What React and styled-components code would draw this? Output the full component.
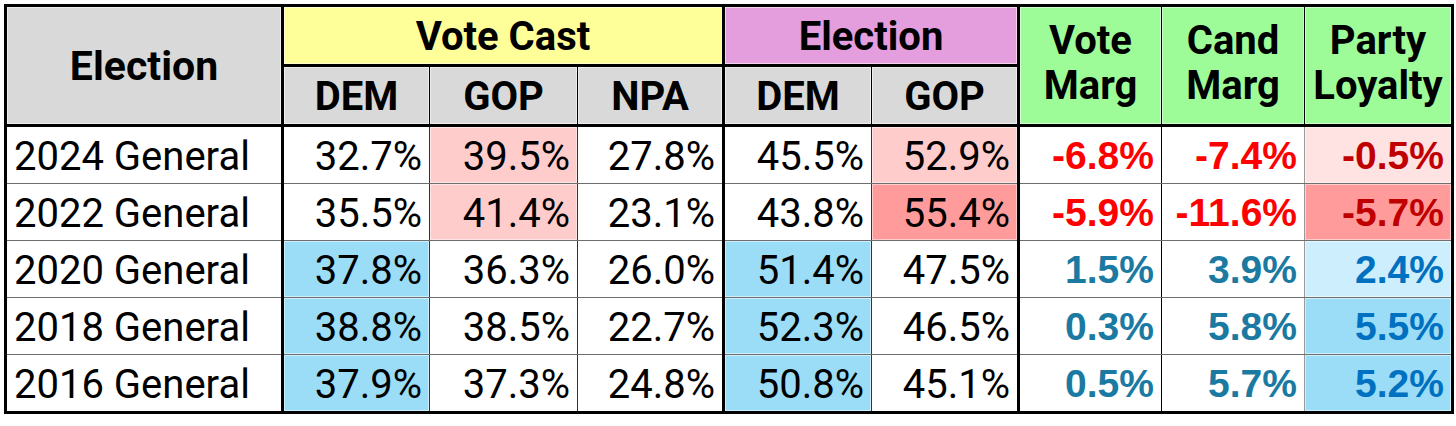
import React from "react";
import styled, { createGlobalStyle } from "styled-components";

// Werte der Tabelle, Zeile für Zeile
const rows = [
  {
    name: "2024 General",
    cast: ["32.7%", "39.5%", "27.8%"],
    castFill: [null, "pink", null],
    election: ["45.5%", "52.9%"],
    electionFill: [null, "pink"],
    vote: "-6.8%",
    cand: "-7.4%",
    loyalty: "-0.5%",
    loyaltyFill: "palePink",
  },
  {
    name: "2022 General",
    cast: ["35.5%", "41.4%", "23.1%"],
    castFill: [null, "pink", null],
    election: ["43.8%", "55.4%"],
    electionFill: [null, "red"],
    vote: "-5.9%",
    cand: "-11.6%",
    loyalty: "-5.7%",
    loyaltyFill: "red",
  },
  {
    name: "2020 General",
    cast: ["37.8%", "36.3%", "26.0%"],
    castFill: ["blue", null, null],
    election: ["51.4%", "47.5%"],
    electionFill: ["blue", null],
    vote: "1.5%",
    cand: "3.9%",
    loyalty: "2.4%",
    loyaltyFill: "paleBlue",
  },
  {
    name: "2018 General",
    cast: ["38.8%", "38.5%", "22.7%"],
    castFill: ["blue", null, null],
    election: ["52.3%", "46.5%"],
    electionFill: ["blue", null],
    vote: "0.3%",
    cand: "5.8%",
    loyalty: "5.5%",
    loyaltyFill: "blue",
  },
  {
    name: "2016 General",
    cast: ["37.9%", "37.3%", "24.8%"],
    castFill: ["blue", null, null],
    election: ["50.8%", "45.1%"],
    electionFill: ["blue", null],
    vote: "0.5%",
    cand: "5.7%",
    loyalty: "5.2%",
    loyaltyFill: "blue",
  },
];

const fills = {
  gray: "#d9d9d9",
  yellow: "#ffff99",
  purple: "#e49ddd",
  green: "#9dfb98",
  pink: "#ffcccc",
  red: "#ff9b9b",
  palePink: "#ffe2e2",
  blue: "#9bdcf6",
  paleBlue: "#cdeefc",
};

const isNeg = (v) => v.startsWith("-");

function App() {
  return (
    <>
      <GlobalStyle />
      <Page>
        <Table>
          <colgroup>
            <col style={{ width: 277 }} />
            <col style={{ width: 147 }} />
            <col style={{ width: 148 }} />
            <col style={{ width: 146 }} />
            <col style={{ width: 148 }} />
            <col style={{ width: 147 }} />
            <col style={{ width: 143 }} />
            <col style={{ width: 143 }} />
            <col style={{ width: 148 }} />
          </colgroup>
          <thead>
            <tr>
              <HeadCell rowSpan={2} $bg="gray" $right>
                Election
              </HeadCell>
              <GroupCell colSpan={3} $bg="yellow" $right>
                Vote Cast
              </GroupCell>
              <GroupCell colSpan={2} $bg="purple" $right>
                Election
              </GroupCell>
              <MarginHead rowSpan={2} $bg="green">
                Vote
                <br />
                Marg
              </MarginHead>
              <MarginHead rowSpan={2} $bg="green">
                Cand
                <br />
                Marg
              </MarginHead>
              <MarginHead rowSpan={2} $bg="green" $last>
                Party
                <br />
                Loyalty
              </MarginHead>
            </tr>
            <tr>
              <SubHead $bg="gray">DEM</SubHead>
              <SubHead $bg="gray">GOP</SubHead>
              <SubHead $bg="gray" $right>
                NPA
              </SubHead>
              <SubHead $bg="gray">DEM</SubHead>
              <SubHead $bg="gray" $right>
                GOP
              </SubHead>
            </tr>
          </thead>
          <tbody>
            {rows.map((r) => (
              <tr key={r.name}>
                <NameCell>{r.name}</NameCell>
                {r.cast.map((v, i) => (
                  <NumCell key={i} $bg={r.castFill[i]} $right={i === 2}>
                    {v}
                  </NumCell>
                ))}
                {r.election.map((v, i) => (
                  <NumCell key={i} $bg={r.electionFill[i]} $right={i === 1}>
                    {v}
                  </NumCell>
                ))}
                <MarginCell $neg={isNeg(r.vote)}>{r.vote}</MarginCell>
                <MarginCell $neg={isNeg(r.cand)} $soft>
                  {r.cand}
                </MarginCell>
                <LoyaltyCell $neg={isNeg(r.loyalty)} $bg={r.loyaltyFill}>
                  {r.loyalty}
                </LoyaltyCell>
              </tr>
            ))}
          </tbody>
        </Table>
      </Page>
    </>
  );
}

const GlobalStyle = createGlobalStyle`
  html, body {
    margin: 0;
    padding: 0;
    background: #ffffff;
  }
`;

const Page = styled.div`
  padding: 4px 0 0 4px;
  width: 1456px;
  height: 426px;
  box-sizing: border-box;
  background: #ffffff;
`;

const Table = styled.table`
  border-collapse: collapse;
  table-layout: fixed;
  width: 1448px;
  border: 3px solid #000;
  font-family: Roboto, "Liberation Sans", sans-serif;
  color: #000;
`;

const HeadCell = styled.th`
  background: ${(p) => fills[p.$bg]};
  box-shadow: inset 0 0 0 1px rgba(255, 255, 255, 0.55);
  border-right: ${(p) => (p.$right ? "3px" : "1px")} solid #000;
  border-bottom: 3px solid #000;
  font-size: 41px;
  font-weight: 700;
  text-align: center;
  padding: 0;
`;

const GroupCell = styled(HeadCell)`
  height: 55px;
  line-height: 40px;
  padding-top: 2px;
  font-size: 40px;
`;

const SubHead = styled(HeadCell)`
  height: 55px;
  padding-top: 2px;
  font-size: 40px;
`;

const MarginHead = styled(HeadCell)`
  font-size: 40px;
  line-height: 45px;
  padding-bottom: 6px;
  border-right: ${(p) => (p.$last ? "0" : "1px solid #000")};
`;

const NameCell = styled.td`
  height: 54px;
  border-right: 3px solid #000;
  border-bottom: 1px solid #6e6e6e;
  font-size: 40px;
  font-weight: 400;
  padding: 2px 0 0 7px;
  white-space: nowrap;
`;

const NumCell = styled.td`
  height: 54px;
  background: ${(p) => (p.$bg ? fills[p.$bg] : "#fff")};
  box-shadow: ${(p) =>
    p.$bg ? "inset 0 0 0 1px rgba(255, 255, 255, 0.5)" : "none"};
  border-right: ${(p) => (p.$right ? "3px solid #000" : "1px solid #333")};
  border-bottom: 1px solid #6e6e6e;
  font-size: 40px;
  text-align: right;
  padding: 2px 7px 0 0;
  white-space: nowrap;
`;

const MarginCell = styled.td`
  height: 54px;
  border-right: 1px solid ${(p) => (p.$soft ? "#9a9a9a" : "#000")};
  border-bottom: 1px solid #6e6e6e;
  font-family: "Liberation Sans", Arial, sans-serif;
  font-weight: 700;
  font-size: 39px;
  color: ${(p) => (p.$neg ? "#ff0000" : "#1b7aa2")};
  text-align: right;
  padding: 2px 7px 0 0;
  white-space: nowrap;
`;

const LoyaltyCell = styled(MarginCell)`
  background: ${(p) => fills[p.$bg]};
  box-shadow: inset 0 0 0 1px rgba(255, 255, 255, 0.5);
  border-right: 0;
  color: ${(p) => (p.$neg ? "#c00000" : "#0070c0")};
`;

export default App;
